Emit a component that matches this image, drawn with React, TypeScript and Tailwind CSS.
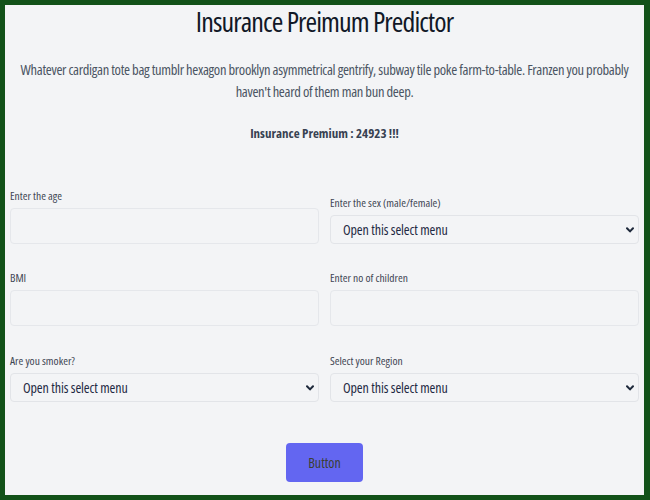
function Chevron() {
  return (
    <svg width="8" height="6" viewBox="0 0 8 6" className="absolute right-[4px] top-1/2 -translate-y-1/2" fill="none">
      <path d="M1 1.2 L4 4.4 L7 1.2" stroke="#1e293b" strokeWidth="2" strokeLinecap="round" strokeLinejoin="round" />
    </svg>
  );
}

function Label({ children }: { children: React.ReactNode }) {
  return <label className="block text-[11.5px] leading-[16px] text-[#3f4654] mb-[4px]">{children}</label>;
}

function TextInput() {
  return <input type="text" className="block w-full h-[36px] bg-[#f3f4f6] border border-[#e5e7eb] rounded-[4px] outline-none" />;
}

function Select() {
  return (
    <div className="relative h-[29px] w-full bg-[#f3f4f6] border border-[#e2e4e8] rounded-[4px] flex items-center pl-[12px]">
      <span className="text-[14px] leading-[20px] text-[#1f2a44] tracking-[-0.1px]">Open this select menu</span>
      <Chevron />
    </div>
  );
}

export default function App() {
  return (
    <div
      className="w-[650px] h-[500px] bg-[#125219] pt-[5px] pl-[5px] pr-[6px] pb-[5px] font-stretch-[75%]"
      style={{ fontFamily: '"Open Sans", sans-serif' }}
    >
      <div className="h-full bg-[#f3f4f6] px-[5px] flex flex-col">
        <h1 className="text-center text-[28px] leading-[32px] font-medium text-[#111827] tracking-[-0.9px]">
          Insurance Preimum Predictor
        </h1>
        <p className="mt-[22px] mx-auto max-w-[614px] text-center text-[14.5px] leading-[22px] tracking-[-0.32px] text-[#4b5563]">
          Whatever cardigan tote bag tumblr hexagon brooklyn asymmetrical gentrify, subway tile poke farm-to-table. Franzen you probably haven't heard of them man bun deep.
        </p>
        <p className="mt-[20px] text-center text-[13px] leading-[20px] font-bold text-[#374151]">
          Insurance Premium : 24923 !!!
        </p>

        <div className="mt-[45px] grid grid-cols-2 gap-x-[11px] items-end">
          <div>
            <Label>Enter the age</Label>
            <TextInput />
          </div>
          <div>
            <Label>Enter the sex (male/female)</Label>
            <Select />
          </div>
        </div>

        <div className="mt-[26px] grid grid-cols-2 gap-x-[11px] items-end">
          <div>
            <Label>BMI</Label>
            <TextInput />
          </div>
          <div>
            <Label>Enter no of children</Label>
            <TextInput />
          </div>
        </div>

        <div className="mt-[27px] grid grid-cols-2 gap-x-[11px] items-end">
          <div>
            <Label>Are you smoker?</Label>
            <Select />
          </div>
          <div>
            <Label>Select your Region</Label>
            <Select />
          </div>
        </div>

        <div className="mt-[41px] flex justify-center">
          <button className="w-[77px] h-[39px] bg-[#6366f1] rounded-[4px] text-[14px] text-[#3b3f35]">Button</button>
        </div>
      </div>
    </div>
  );
}
